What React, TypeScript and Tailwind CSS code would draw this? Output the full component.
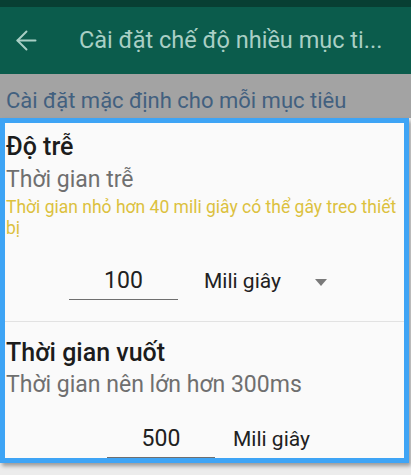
import { ArrowLeft } from 'lucide-react'

interface DurationFieldProps {
  value: string
  unit: string
  inputWidth: string
  unitGap: string
  withDropdown?: boolean
  className?: string
}

function DurationField({ value, unit, inputWidth, unitGap, withDropdown, className }: DurationFieldProps) {
  return (
    <div className={`flex items-center ${className ?? ''}`}>
      <div className={`${inputWidth} h-[36px] flex items-center justify-center border-b border-[#6f6f6f] text-[23px] text-[#212121]`}>
        {value}
      </div>
      <span className={`${unitGap} text-[21px] text-[#212121]`}>{unit}</span>
      {withDropdown && (
        <svg className="ml-[34px]" width="12" height="7" viewBox="0 0 12 7">
          <path d="M0 0h12L6 7z" fill="#7a7a7a" />
        </svg>
      )}
    </div>
  )
}

export default function App() {
  return (
    <div className="w-[411px] h-[475px] overflow-hidden bg-[#ececec] font-['Roboto',sans-serif]">
      {/* status bar */}
      <div className="h-[7px] bg-[#083f33]" />

      {/* toolbar */}
      <div className="h-[67px] bg-[#0b5c4c] flex items-center">
        <ArrowLeft className="ml-[11px] text-[#a9cfc5]" size={31} strokeWidth={1.5} />
        <h1 className="ml-[37px] text-[23.5px] text-[#a9cfc5] whitespace-nowrap">
          Cài đặt chế độ nhiều mục ti...
        </h1>
      </div>

      {/* section header */}
      <div className="h-[44px] bg-[#a3a3a3] flex items-center px-[6px]">
        <span className="text-[22px] leading-[28px] text-[#42607f] mt-[10px] whitespace-nowrap">
          Cài đặt mặc định cho mỗi mục tiêu
        </span>
      </div>

      {/* highlighted settings card */}
      <div className="w-[409px] h-[345px] border-[5px] border-[#3ea4f5] bg-[#fafafa] shadow-[2px_3px_4px_rgba(0,0,0,0.35)] overflow-hidden">
        <div className="pl-[1px]">
          <h2 className="pt-[10px] text-[25px] leading-[28px] font-medium text-[#1c1c1c]">Độ trễ</h2>
          <p className="mt-[6px] text-[23px] leading-[26px] text-[#6f6f6f]">Thời gian trễ</p>
          <p className="mt-[4px] text-[17.5px] leading-[21px] text-[#dcc13e] w-[404px]">
            Thời gian nhỏ hơn 40 mili giây có thể gây treo thiết bị
          </p>
          <DurationField
            value="100"
            unit="Mili giây"
            inputWidth="w-[109px]"
            unitGap="ml-[26px]"
            withDropdown
            className="mt-[25px] ml-[63px]"
          />
        </div>

        <div className="mt-[21px] h-px bg-[#e2e2e2]" />

        <div className="pl-[1px]">
          <h2 className="mt-[17px] text-[25px] leading-[28px] font-medium text-[#1c1c1c]">Thời gian vuốt</h2>
          <p className="mt-[5px] text-[23px] leading-[26px] text-[#6f6f6f]">Thời gian nên lớn hơn 300ms</p>
          <DurationField
            value="500"
            unit="Mili giây"
            inputWidth="w-[108px]"
            unitGap="ml-[18px]"
            className="mt-[24px] ml-[101px]"
          />
        </div>
      </div>
    </div>
  )
}
